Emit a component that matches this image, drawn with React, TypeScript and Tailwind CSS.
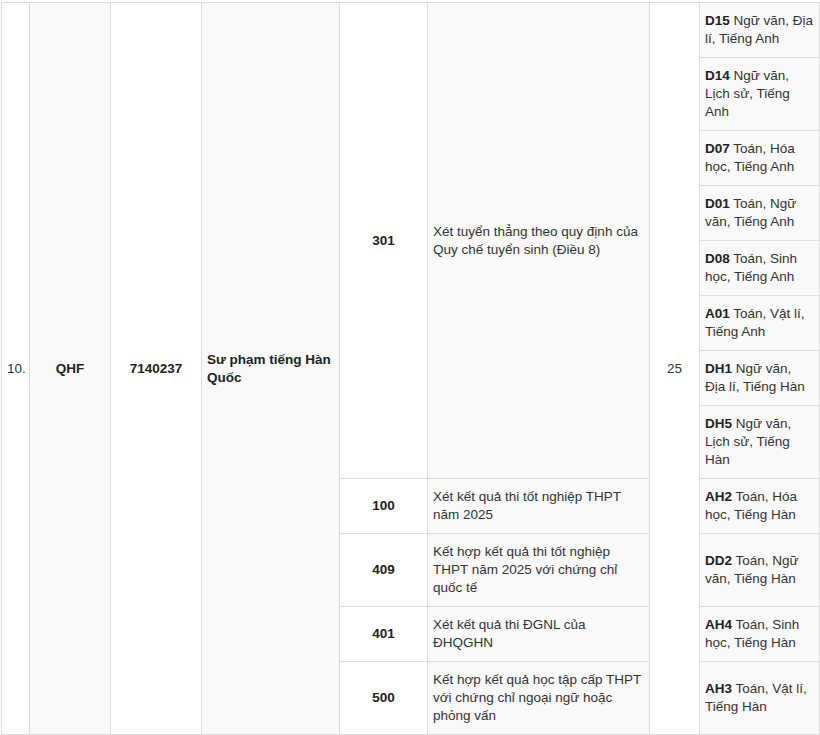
const font = { fontFamily: '"Liberation Sans", Arial, sans-serif' };

type Combo = { code: string; lines: string[] };

const directCombos: Combo[] = [
  { code: "D15", lines: ["Ngữ văn, Địa", "lí, Tiếng Anh"] },
  { code: "D14", lines: ["Ngữ văn,", "Lịch sử, Tiếng", "Anh"] },
  { code: "D07", lines: ["Toán, Hóa", "học, Tiếng Anh"] },
  { code: "D01", lines: ["Toán, Ngữ", "văn, Tiếng Anh"] },
  { code: "D08", lines: ["Toán, Sinh", "học, Tiếng Anh"] },
  { code: "A01", lines: ["Toán, Vật lí,", "Tiếng Anh"] },
  { code: "DH1", lines: ["Ngữ văn,", "Địa lí, Tiếng Hàn"] },
  { code: "DH5", lines: ["Ngữ văn,", "Lịch sử, Tiếng", "Hàn"] },
];

const methods = [
  {
    code: "100",
    name: ["Xét kết quả thi tốt nghiệp THPT", "năm 2025"],
    combo: { code: "AH2", lines: ["Toán, Hóa", "học, Tiếng Hàn"] },
  },
  {
    code: "409",
    name: ["Kết hợp kết quả thi tốt nghiệp", "THPT năm 2025 với chứng chỉ", "quốc tế"],
    combo: { code: "DD2", lines: ["Toán, Ngữ", "văn, Tiếng Hàn"] },
  },
  {
    code: "401",
    name: ["Xét kết quả thi ĐGNL của", "ĐHQGHN"],
    combo: { code: "AH4", lines: ["Toán, Sinh", "học, Tiếng Hàn"] },
  },
  {
    code: "500",
    name: ["Kết hợp kết quả học tập cấp THPT", "với chứng chỉ ngoại ngữ hoặc", "phỏng vấn"],
    combo: { code: "AH3", lines: ["Toán, Vật lí,", "Tiếng Hàn"] },
  },
];

const cell = "border border-[#dcdcdc] px-[5px] py-[9px] align-middle whitespace-nowrap";
const gray = "bg-[#f9f9f9]";

function Lines({ lines }: { lines: string[] }) {
  return (
    <>
      {lines.map((l, i) => (
        <span key={i}>
          {i > 0 && <br />}
          {l}
        </span>
      ))}
    </>
  );
}

function ComboCell({ combo }: { combo: Combo }) {
  const [first, ...rest] = combo.lines;
  return (
    <td className={`${cell} ${gray}`}>
      <b className="font-bold text-[#222]">{combo.code}</b> {first}
      {rest.map((l, i) => (
        <span key={i}>
          <br />
          {l}
        </span>
      ))}
    </td>
  );
}

export default function App() {
  return (
    <div className="bg-white w-[820px] h-[735px] overflow-hidden pt-[2px] pl-[1px]" style={font}>
      <table className="table-fixed border-collapse w-[819px] text-[13.5px] leading-[18px] text-[#333]">
        <colgroup>
          <col className="w-[28px]" />
          <col className="w-[81px]" />
          <col className="w-[91px]" />
          <col className="w-[138px]" />
          <col className="w-[88px]" />
          <col className="w-[222px]" />
          <col className="w-[50px]" />
          <col className="w-[120px]" />
        </colgroup>
        <tbody>
          {directCombos.map((combo, i) => (
            <tr key={combo.code}>
              {i === 0 && (
                <>
                  <td rowSpan={12} className={`${cell} text-left`}>10.</td>
                  <td rowSpan={12} className={`${cell} ${gray} text-center font-bold text-[#222]`}>QHF</td>
                  <td rowSpan={12} className={`${cell} text-center font-bold text-[#222]`}>7140237</td>
                  <td rowSpan={12} className={`${cell} ${gray} text-left font-bold text-[#222]`}>
                    <Lines lines={["Sư phạm tiếng Hàn", "Quốc"]} />
                  </td>
                  <td rowSpan={8} className={`${cell} text-center font-bold text-[#222]`}>301</td>
                  <td rowSpan={8} className={`${cell} ${gray}`}>
                    <Lines lines={["Xét tuyển thẳng theo quy định của", "Quy chế tuyển sinh (Điều 8)"]} />
                  </td>
                  <td rowSpan={12} className={`${cell} text-center`}>25</td>
                </>
              )}
              <ComboCell combo={combo} />
            </tr>
          ))}
          {methods.map((m) => (
            <tr key={m.code}>
              <td className={`${cell} text-center font-bold text-[#222]`}>{m.code}</td>
              <td className={`${cell} ${gray}`}>
                <Lines lines={m.name} />
              </td>
              <ComboCell combo={m.combo} />
            </tr>
          ))}
        </tbody>
      </table>
    </div>
  );
}
